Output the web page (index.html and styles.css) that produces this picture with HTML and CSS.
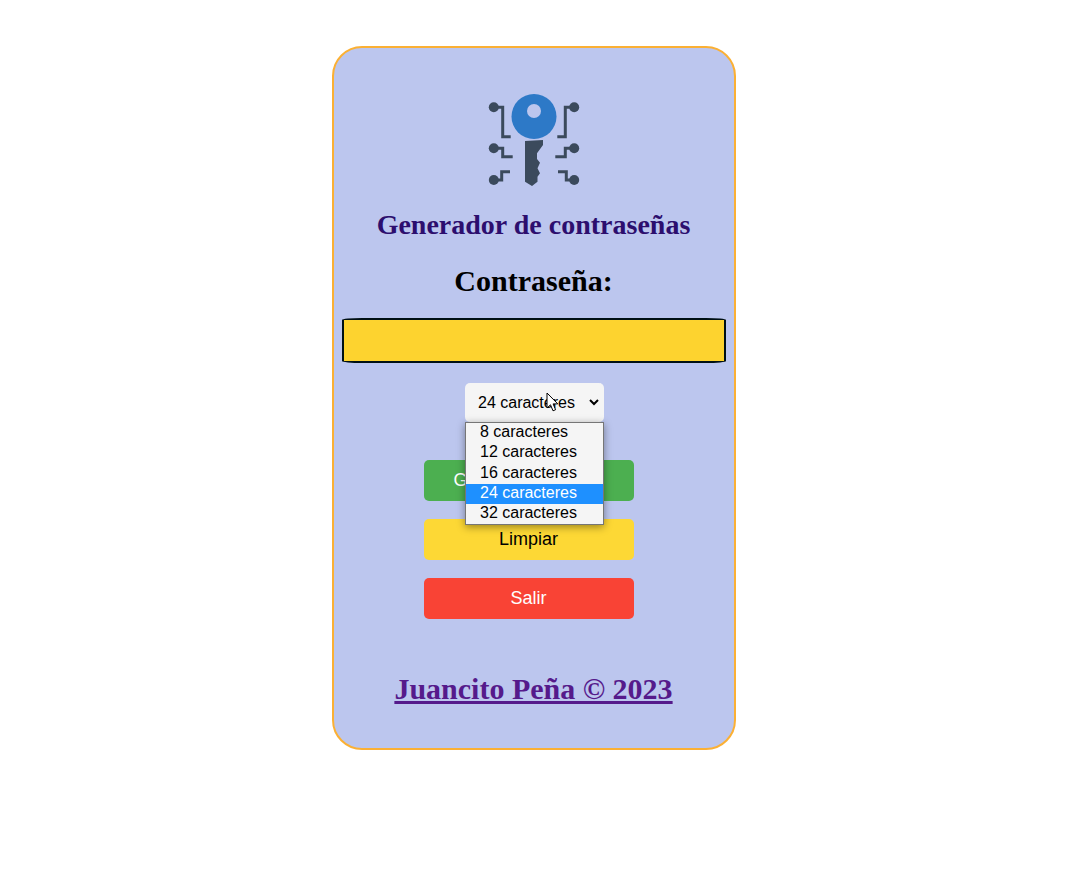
FILE: index.html
```html
<!DOCTYPE html>
<html lang="es">
<head>
    <meta charset="UTF-8">
    <title>Generador de contraseñas</title>
    <meta name="viewport" content="width=device-width, initial-scale=1.0">
    <link rel="stylesheet" href="styles.css">
</head>
<body>
    <main class="card">
        <svg class="logo" width="92" height="92" viewBox="0 0 92 92" aria-hidden="true">
            <g class="traces">
                <path d="M6 13.3H14.7V42.7H22.7"/>
                <path d="M86 13.3H77.3V42.7H69.3"/>
                <path d="M6 54.3H14.7V62.7H24.7"/>
                <path d="M86 54.3H77.3V62.7H67.3"/>
                <path d="M6 86H13.7V77.7H22"/>
                <path d="M86 86H78.3V77.7H70"/>
            </g>
            <g class="dots">
                <circle cx="5.8" cy="13.3" r="5"/>
                <circle cx="86.2" cy="13.3" r="5"/>
                <circle cx="5.8" cy="54.3" r="5"/>
                <circle cx="86.2" cy="54.3" r="5"/>
                <circle cx="5.8" cy="86" r="5"/>
                <circle cx="86.2" cy="86" r="5"/>
                <path d="M37 47L55 46V51L49 59.3V65L52 68.7L49.5 74.3L52 79.3L49.5 82.7V87.7L44 92L37 87.7Z"/>
            </g>
            <circle class="bow" cx="46" cy="22.5" r="22.5"/>
            <circle class="hole" cx="46" cy="17" r="7"/>
        </svg>
        <h2 class="title">Generador de contraseñas</h2>
        <h1 class="label">Contraseña:</h1>
        <input class="output" type="text" readonly>
        <div class="picker">
            <select class="length">
                <option>8 caracteres</option>
                <option>12 caracteres</option>
                <option>16 caracteres</option>
                <option selected>24 caracteres</option>
                <option>32 caracteres</option>
            </select>
            <ul class="dropdown">
                <li>8 caracteres</li>
                <li>12 caracteres</li>
                <li>16 caracteres</li>
                <li class="active">24 caracteres</li>
                <li>32 caracteres</li>
            </ul>
            <svg class="cursor" width="13" height="21" viewBox="0 0 13 21" aria-hidden="true">
                <path d="M1 1V16L4.5 12.8L7 18.8L9.6 17.7L7.1 11.9H11.8Z"/>
            </svg>
        </div>
        <div class="actions">
            <button class="btn btn-green">Generar Password</button>
            <button class="btn btn-yellow">Limpiar</button>
            <button class="btn btn-red">Salir</button>
        </div>
        <a class="credit" href="#">Juancito Peña © 2023</a>
    </main>
</body>
</html>
```

FILE: styles.css
```css
body {
    background: #fff;
    font-family: "Liberation Serif", serif;
    margin: 0;
    padding: 0;
}
.card {
    box-sizing: border-box;
    width: 404px;
    height: 704px;
    margin: 46px auto 0;
    padding: 46px 8px 0;
    display: flex;
    flex-direction: column;
    align-items: center;
    background: #bcc6ee;
    border: 2px solid #fbb034;
    border-radius: 30px;
}
.logo {
    display: block;
    flex: none;
}
.traces path {
    fill: none;
    stroke: #3b4a5c;
    stroke-width: 3;
}
.dots {
    fill: #3b4a5c;
}
.bow {
    fill: #2d79c7;
}
.hole {
    fill: #bcc6ee;
}
.title {
    margin: 23px 0 0;
    font-size: 28px;
    line-height: 31px;
    font-weight: bold;
    color: #2c0e6e;
}
.label {
    margin: 24px 0 0;
    font-size: 30px;
    line-height: 34px;
    font-weight: bold;
    color: #000;
}
.output {
    box-sizing: border-box;
    width: 384px;
    height: 45px;
    margin: 20px 0 0;
    padding: 0;
    background: #fdd32f;
    border: 2px solid #001014;
    border-radius: 20px / 2px;
    outline: none;
}
.picker {
    position: relative;
    margin: 20px 0 0 2px;
    width: 139px;
    height: 39px;
}
.length {
    display: block;
    box-sizing: border-box;
    width: 139px;
    height: 39px;
    padding: 0 9px;
    font-family: "Liberation Sans", sans-serif;
    font-size: 16px;
    color: #000;
    background: #f5f5f5;
    border: none;
    border-right: 2px solid #f5f5f5;
    border-radius: 5px;
}
.dropdown {
    position: absolute;
    top: 39px;
    left: 0;
    box-sizing: border-box;
    width: 139px;
    height: 103px;
    margin: 0;
    padding: 0;
    list-style: none;
    font-family: "Liberation Sans", sans-serif;
    font-size: 16px;
    line-height: 18px;
    color: #000;
    background: #f5f5f5;
    border: 1px solid #767676;
    box-shadow: 0 2px 8px rgba(0,0,0,0.4);
}
.dropdown li {
    height: 20.33px;
    padding-left: 14px;
}
.dropdown .active {
    background: #1e90ff;
    color: #fff;
}
.cursor {
    position: absolute;
    top: 9px;
    left: 81px;
}
.cursor path {
    fill: #fff;
    stroke: #000;
    stroke-width: 1;
}
.actions {
    display: flex;
    flex-direction: column;
    gap: 18px;
    margin: 38px 10px 0 0;
}
.btn {
    display: block;
    width: 210px;
    height: 41px;
    padding: 0;
    font-family: "Liberation Sans", sans-serif;
    font-size: 18px;
    border: none;
    border-radius: 5px;
}
.btn-green {
    background: #4caf50;
    color: #fff;
}
.btn-yellow {
    background: #fdd835;
    color: #000;
}
.btn-red {
    background: #f94335;
    color: #fff;
}
.credit {
    margin-top: 53px;
    font-size: 30px;
    line-height: 34px;
    font-weight: bold;
    color: #551a8b;
}
```
